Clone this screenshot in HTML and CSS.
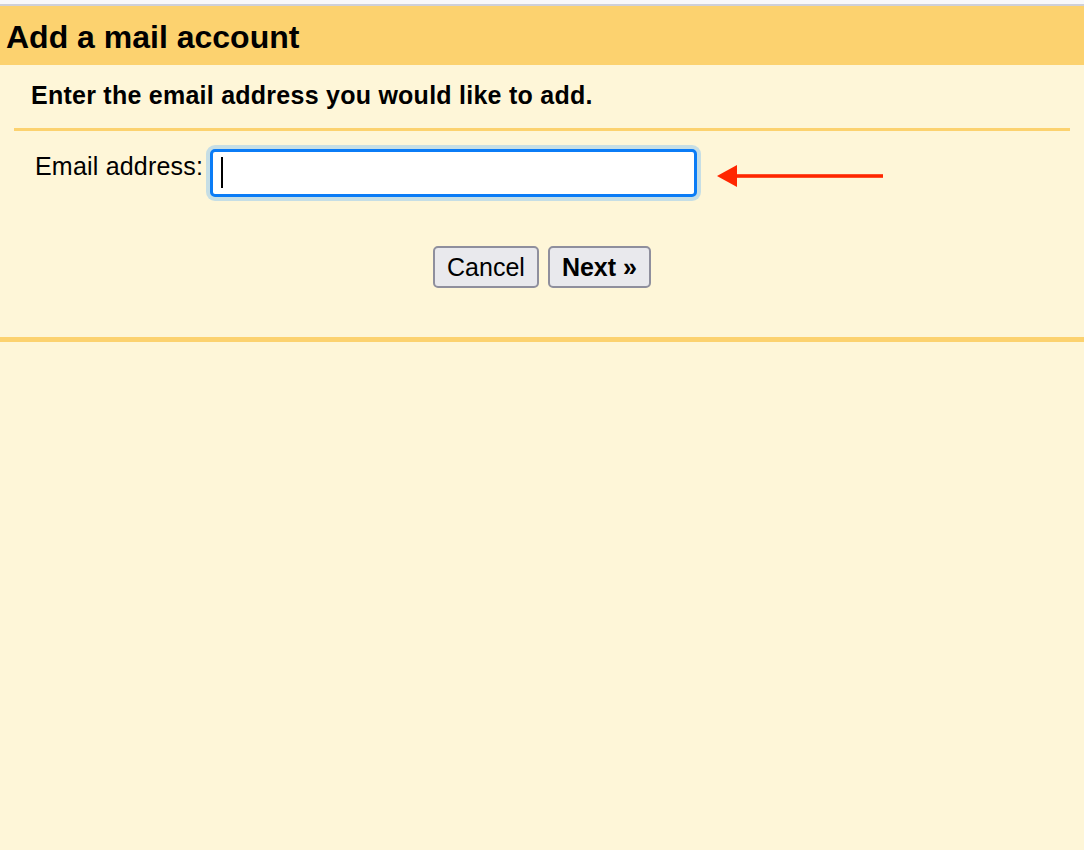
FILE: index.html
```html
<!DOCTYPE html>
<html lang="en">
<head>
<meta charset="utf-8">
<title>Add a mail account</title>
<link rel="stylesheet" href="styles.css">
</head>
<body>
<div class="chrome"></div>
<header class="title-bar">
  <h1 class="title">Add a mail account</h1>
</header>
<main class="dialog">
  <div class="panel">
    <div class="subtitle">Enter the email address you would like to add.</div>
    <div class="field-row">
      <label class="field-label" for="email">Email address:</label>
      <div class="input-wrap">
        <input id="email" class="text-input" type="text" value="">
        <span class="caret"></span>
      </div>
      <svg class="arrow" width="168" height="22" viewBox="0 0 168 22" aria-hidden="true">
        <polygon points="0,11 20,0 20,22" fill="#ff2600"/>
        <rect x="19" y="9.2" width="147" height="3.6" fill="#ff2600"/>
      </svg>
    </div>
    <div class="buttons">
      <button class="btn" type="button">Cancel</button>
      <button class="btn btn-primary" type="button">Next »</button>
    </div>
  </div>
</main>
</body>
</html>
```
FILE: styles.css
```css
html, body {
  margin: 0;
  padding: 0;
}

body {
  background: #fef6d8;
  font-family: "Liberation Sans", Arial, Helvetica, sans-serif;
  color: #000;
  min-height: 850px;
}

.chrome {
  height: 4px;
  background: #f8f8fa;
  border-bottom: 2px solid #cfd0d8;
}

.title-bar {
  background: #fcd26f;
  height: 59px;
  box-sizing: border-box;
  padding: 4px 0 0 6px;
  display: flex;
  align-items: center;
}

.title {
  margin: 0;
  font-size: 32px;
  font-weight: bold;
  letter-spacing: 0;
  white-space: nowrap;
}

.dialog {
  border-bottom: 5px solid #fcd26f;
  padding-bottom: 49px;
}

.panel {
  padding: 0 14px;
}

.subtitle {
  height: 66px;
  box-sizing: border-box;
  border-bottom: 3px solid #fcd26f;
  padding: 0 0 2px 17px;
  display: flex;
  align-items: center;
  font-size: 25px;
  font-weight: bold;
  letter-spacing: 0.25px;
  white-space: nowrap;
}

.field-row {
  display: flex;
  align-items: flex-start;
  padding-top: 18px;
}

.field-label {
  flex: 0 0 196px;
  box-sizing: border-box;
  padding-left: 21px;
  margin-top: 3px;
  font-size: 25px;
  letter-spacing: 0.2px;
  white-space: nowrap;
}

.input-wrap {
  position: relative;
  flex: 0 0 487px;
  height: 48px;
}

.text-input {
  display: block;
  width: 487px;
  height: 48px;
  box-sizing: border-box;
  border: 3px solid #0b7cf6;
  border-radius: 5px;
  box-shadow: 0 0 0 4px #c6dee5;
  background: #fff;
  padding: 0 8px;
  font-family: inherit;
  font-size: 22px;
  outline: none;
  caret-color: transparent;
}

.caret {
  position: absolute;
  left: 11px;
  top: 8px;
  width: 2px;
  height: 31px;
  background: #000;
}

.arrow {
  display: block;
  flex: 0 0 auto;
  margin: 16px 0 0 20px;
}

.buttons {
  display: flex;
  justify-content: center;
  gap: 9px;
  margin-top: 49px;
}

.btn {
  height: 42px;
  box-sizing: border-box;
  padding: 0 12px;
  border: 2px solid #8f8f9d;
  border-radius: 5px;
  background: #e9e9ed;
  font-family: inherit;
  font-size: 25px;
  color: #000;
  line-height: 1;
}

.btn-primary {
  font-weight: bold;
  padding: 0 12px;
}
```
